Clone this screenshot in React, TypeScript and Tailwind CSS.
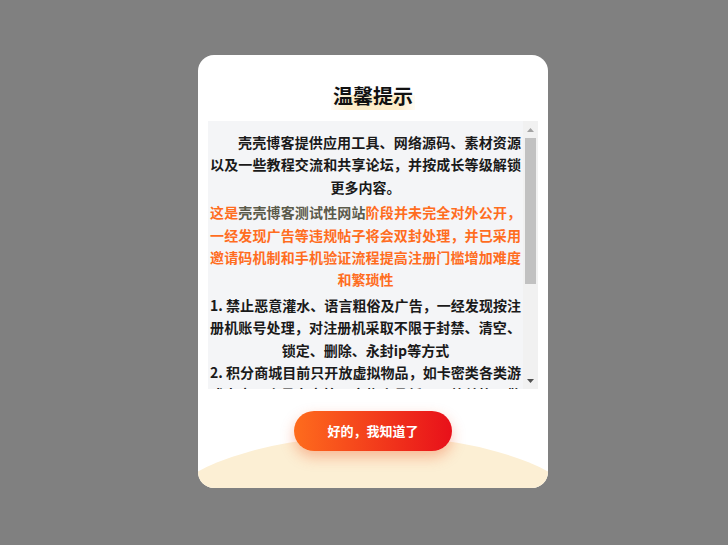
const rules = [
  "1. 禁止恶意灌水、语言粗俗及广告，一经发现按注册机账号处理，对注册机采取不限于封禁、清空、锁定、删除、永封ip等方式",
  "2. 积分商城目前只开放虚拟物品，如卡密类各类游戏卡密、会员卡密等，实物商品暂不开放兑换，敬请期待",
  "3. 本站所有资源均来源于网络，仅供学习交流使用，请勿用于商业用途，如有侵权请联系管理员删除",
  "4. 请遵守国家相关法律法规，文明发言，共同维护良好的社区环境",
];

export default function App() {
  return (
    <div
      className="w-full h-[545px] bg-[#808080] flex items-center justify-center"
      style={{ fontFamily: '"Noto Sans CJK SC", "Noto Sans", sans-serif' }}
    >
      <div className="relative ml-[18px] w-[350px] h-[433px] -mt-[2px] bg-white rounded-[16px] overflow-hidden flex flex-col items-center pt-[27px]">
        {/* bottom wave */}
        <div className="absolute left-1/2 -translate-x-1/2 top-[381px] w-[440px] h-[180px] rounded-[50%] bg-[#fcefd4]"></div>

        <h2 className="relative text-[20px] leading-[28px] font-bold text-[#111] px-[2px] bg-[linear-gradient(to_right,rgba(253,238,206,0.2),#fdecc8_20%,#fdecc8_80%,rgba(253,238,206,0.2))] bg-no-repeat bg-[length:100%_55%] bg-bottom">
          温馨提示
        </h2>

        <div className="relative mt-[11px] w-[330px] h-[268px] bg-[#f4f5f7] flex">
          <div className="flex-1 h-full overflow-y-scroll [scrollbar-width:none] pl-[2px] pr-[2px] py-[10px] text-[14px] leading-[1.6] font-semibold text-[#1a1a1a] text-justify [text-align-last:center]">
            <p className="indent-[2em] mb-[3px]">
              壳壳博客提供应用工具、网络源码、素材资源以及一些教程交流和共享论坛，并按成长等级解锁更多内容。
            </p>
            <p className="mb-[3px] text-[#ff6d1f]">
              这是<span className="text-[#5a5a4a]">壳壳博客测试性网站</span>阶段并未完全对外公开，一经发现广告等违规帖子将会双封处理，并已采用邀请码机制和手机验证流程提高注册门槛增加难度和繁琐性
            </p>
            <p>
              {rules.map((r, i) => (
                <span key={i}>
                  {r}
                  {i < rules.length - 1 && <br />}
                </span>
              ))}
            </p>
          </div>

          {/* scrollbar */}
          <div className="w-[15px] h-full bg-[#f1f1f1] flex flex-col">
            <div className="h-[17px] flex items-center justify-center">
              <svg width="7" height="4" viewBox="0 0 7 4">
                <path d="M0 4 L3.5 0 L7 4 Z" fill="#a3a3a3" />
              </svg>
            </div>
            <div className="h-[146px] mx-[2px] bg-[#c1c1c1]"></div>
            <div className="flex-1"></div>
            <div className="h-[17px] flex items-center justify-center">
              <svg width="7" height="4" viewBox="0 0 7 4">
                <path d="M0 0 L7 0 L3.5 4 Z" fill="#505050" />
              </svg>
            </div>
          </div>
        </div>

        <button className="relative mt-[22px] w-[158px] h-[40px] rounded-full bg-[linear-gradient(to_right,#fe6c1d,#e8101a)] text-white text-[13px] font-bold shadow-[0_6px_14px_rgba(240,80,30,0.35)]">
          好的，我知道了
        </button>
      </div>
    </div>
  );
}
